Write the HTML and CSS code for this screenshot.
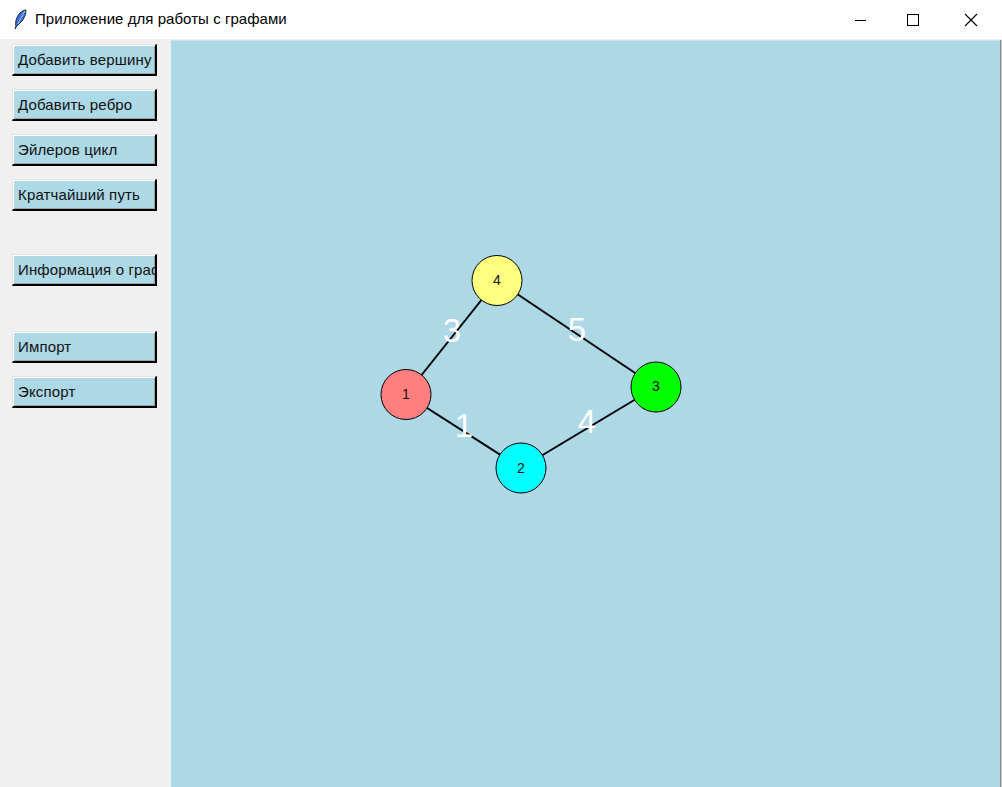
FILE: index.html
```html
<!DOCTYPE html>
<html lang="ru">
<head>
<meta charset="utf-8">
<title>Приложение для работы с графами</title>
<link rel="stylesheet" href="styles.css">
</head>
<body>
<div class="window">
  <div class="titlebar">
    <svg class="app-icon" width="16" height="20" viewBox="0 0 16 20">
      <path d="M4 18 C3 14 4 8 8 4 C10 2 12 1 14 1 C14 4 13 8 10 12 C8 14 6 16 4 18 Z" fill="#3a6fd8" stroke="#1d2a44" stroke-width="1"/>
      <path d="M6 15 C8 11 10 7 13 2" fill="none" stroke="#a9c6ff" stroke-width="1"/>
      <path d="M4 18 L3 20" stroke="#1d2a44" stroke-width="1.2"/>
    </svg>
    <div class="title">Приложение для работы с графами</div>
    <div class="controls">
      <div class="ctl"><svg width="12" height="12" viewBox="0 0 12 12"><path d="M0 6.5 H11" stroke="#000" stroke-width="1"/></svg></div>
      <div class="ctl"><svg width="12" height="12" viewBox="0 0 12 12"><rect x="0.5" y="0.5" width="11" height="11" fill="none" stroke="#000" stroke-width="1"/></svg></div>
      <div class="ctl"><svg width="14" height="14" viewBox="0 0 14 14"><path d="M1 1 L13 13 M13 1 L1 13" stroke="#000" stroke-width="1.1"/></svg></div>
    </div>
  </div>
  <div class="main">
    <div class="sidebar">
      <button class="btn">Добавить вершину</button>
      <button class="btn">Добавить ребро</button>
      <button class="btn">Эйлеров цикл</button>
      <button class="btn">Кратчайший путь</button>
      <button class="btn btn-far">Информация о графе</button>
      <button class="btn btn-far2">Импорт</button>
      <button class="btn">Экспорт</button>
    </div>
    <div class="canvas">
      <svg class="graph" width="829" height="747" viewBox="0 0 829 747">
        <g stroke="#000" stroke-width="2">
          <line x1="235" y1="353.5" x2="326" y2="239.5"/>
          <line x1="326" y1="239.5" x2="485" y2="346"/>
          <line x1="235" y1="353.5" x2="350" y2="427"/>
          <line x1="350" y1="427" x2="485" y2="346"/>
        </g>
        <g class="weights">
          <text x="281" y="289">3</text>
          <text x="406" y="288">5</text>
          <text x="293" y="384">1</text>
          <text x="416" y="380">4</text>
        </g>
        <g class="nodes" stroke="#000" stroke-width="1">
          <circle cx="235" cy="353.5" r="25" fill="#ff7f7f"/>
          <circle cx="350" cy="427" r="25" fill="#00ffff"/>
          <circle cx="485" cy="346" r="25" fill="#00ff00"/>
          <circle cx="326" cy="239.5" r="25" fill="#ffff80"/>
        </g>
        <g class="labels">
          <text x="235" y="353">1</text>
          <text x="350" y="427">2</text>
          <text x="485" y="345">3</text>
          <text x="326" y="239">4</text>
        </g>
      </svg>
    </div>
    <div class="edge"></div>
  </div>
</div>
</body>
</html>
```

FILE: styles.css
```css
* { box-sizing: border-box; }
html, body { margin: 0; padding: 0; }
body {
  width: 1002px;
  height: 787px;
  overflow: hidden;
  font-family: "Liberation Sans", Arial, sans-serif;
  background: #f0f0f0;
}
.window { display: flex; flex-direction: column; height: 787px; }
.titlebar {
  height: 40px;
  background: #fff;
  border-bottom: 1px solid #ececec;
  display: flex;
  align-items: center;
  padding-left: 12px;
  flex: none;
}
.app-icon { margin-right: 7px; margin-top: -2px; }
.title {
  font-family: "Liberation Sans", Arial, sans-serif;
  font-size: 15px;
  color: #000;
  letter-spacing: 0.05px;
  padding-bottom: 2px;
}
.controls { margin-left: auto; display: flex; height: 39px; margin-right: 2px; }
.ctl {
  width: 58px;
  display: flex;
  align-items: center;
  justify-content: center;
}
.ctl:first-child { width: 46px; }
.main { flex: 1; display: flex; min-height: 0; }
.sidebar {
  width: 171px;
  flex: none;
  background: #f0f0f0;
  padding: 4px 0 0 12px;
  display: flex;
  flex-direction: column;
  align-items: flex-start;
}
.btn {
  width: 145px;
  height: 32px;
  margin: 0 0 13px 0;
  padding: 0 0 1px 5px;
  background: #add8e6;
  font-family: "Liberation Sans", Arial, sans-serif;
  font-size: 15px;
  letter-spacing: 0.15px;
  color: #111;
  text-align: left;
  white-space: nowrap;
  overflow: hidden;
  border-style: solid;
  border-width: 1px 2px 2px 1px;
  border-color: #e3e3e3 #000 #000 #e3e3e3;
  box-shadow: inset 1px 1px 0 #fff, inset -1px -1px 0 #a0a0a0;
  border-radius: 0;
}
.btn-far { margin-top: 30px; }
.btn-far2 { margin-top: 32px; }
.canvas {
  flex: 1;
  background: #add8e6;
  border-top: 1px solid #c6e3ec;
  position: relative;
  overflow: hidden;
}
.graph { display: block; }
.weights text {
  fill: #fff;
  font-family: "Liberation Sans", Arial, sans-serif;
  font-size: 33px;
  text-anchor: middle;
  dominant-baseline: central;
}
.labels text {
  fill: #111;
  font-family: "Liberation Sans", Arial, sans-serif;
  font-size: 14px;
  text-anchor: middle;
  dominant-baseline: central;
}
.edge {
  width: 2px;
  flex: none;
  background: #8a8a8a;
  border-right: 1px solid #c8c8c8;
}
```
